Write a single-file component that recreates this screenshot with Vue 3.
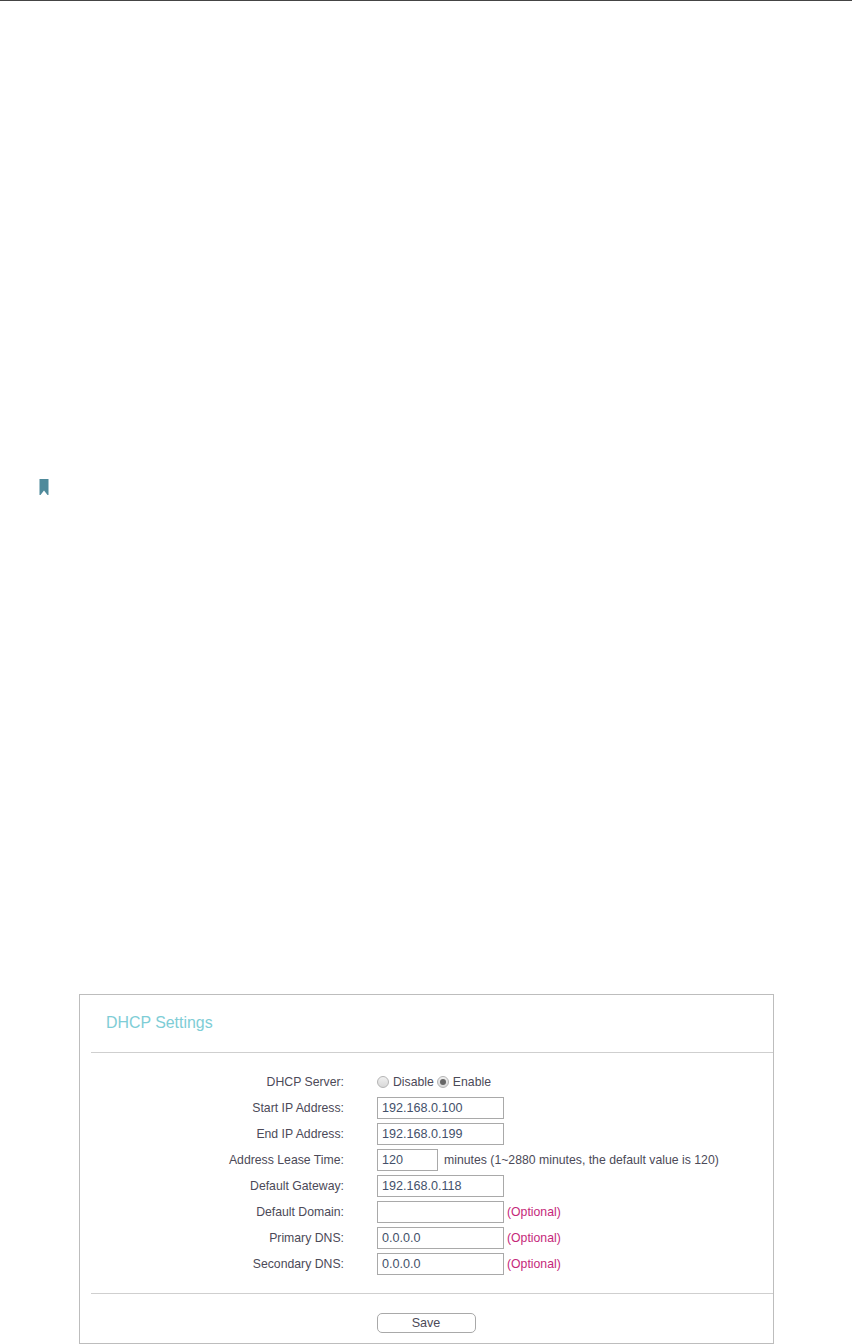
<script setup>
const rows = [
  { label: 'Start IP Address:', value: '192.168.0.100' },
  { label: 'End IP Address:', value: '192.168.0.199' },
  { label: 'Address Lease Time:', value: '120', short: true, note: 'minutes (1~2880 minutes, the default value is 120)' },
  { label: 'Default Gateway:', value: '192.168.0.118' },
  { label: 'Default Domain:', value: '', optional: true },
  { label: 'Primary DNS:', value: '0.0.0.0', optional: true },
  { label: 'Secondary DNS:', value: '0.0.0.0', optional: true },
]
</script>

<template>
  <div class="page">
    <div class="topline"></div>
    <div class="marker">
      <svg width="10" height="16" viewBox="0 0 10 16" aria-hidden="true">
        <path d="M0.5 0H9.5V16H8.5L5 11.5L1.5 16H0.5Z" fill="#4f8a9b" />
      </svg>
    </div>
    <section class="panel">
      <h2 class="title">DHCP Settings</h2>
      <div class="rule"></div>
      <div class="form">
        <div class="row">
          <span class="label">DHCP Server:</span>
          <span class="field radios">
            <span class="radio"></span><span class="radio-text">Disable</span>
            <span class="radio on"></span><span class="radio-text">Enable</span>
          </span>
        </div>
        <div v-for="r in rows" :key="r.label" class="row">
          <span class="label">{{ r.label }}</span>
          <span class="field">
            <span class="input" :class="{ short: r.short }">{{ r.value }}</span>
            <span v-if="r.note" class="note">{{ r.note }}</span>
            <span v-if="r.optional" class="optional">(Optional)</span>
          </span>
        </div>
      </div>
      <div class="rule"></div>
      <div class="actions"><span class="save">Save</span></div>
    </section>
  </div>
</template>

<style>
html, body { margin: 0; background: #fff; }
</style>

<style scoped>
.page {
  width: 852px;
  height: 1344px;
  overflow: hidden;
  background: #fff;
  font-family: "Liberation Sans", Arial, sans-serif;
  box-sizing: border-box;
}
.topline { height: 1px; background: #444; }
.marker { height: 993px; box-sizing: border-box; padding: 478px 0 0 39px; }
.marker svg { display: block; }
.panel {
  width: 695px;
  height: 350px;
  margin-left: 79px;
  box-sizing: border-box;
  border: 1px solid #bdbdbd;
  border-right-width: 1px;
  padding-left: 11px;
}
.title {
  margin: 0;
  height: 57px;
  padding-left: 15px;
  font-size: 15.9px;
  font-weight: 400;
  line-height: 55px;
  color: #7ecdd6;
}
.rule { height: 1px; background: #cfcfcf; }
.form { padding-top: 16px; height: 240px; box-sizing: border-box; }
.row { display: flex; align-items: center; height: 26px; font-size: 12.25px; color: #4c4a58; }
.label { width: 253px; text-align: right; flex: none; }
.field { display: flex; align-items: center; margin-left: 33px; }
.input {
  width: 127px;
  height: 22px;
  box-sizing: border-box;
  border: 1px solid #a9a9a9;
  padding-left: 4px;
  line-height: 20px;
  color: #44506a;
  font-size: 12.6px;
}
.input.short { width: 61px; }
.note { margin-left: 6px; }
.optional { margin-left: 3px; color: #c5287a; }
.radios { gap: 0; }
.radio {
  width: 12px;
  height: 12px;
  box-sizing: border-box;
  border-radius: 50%;
  border: 1px solid #b4b4b4;
  background: linear-gradient(#f0f0f0, #d8d8d8);
  position: relative;
}
.radio.on::after {
  content: "";
  position: absolute;
  left: 2px;
  top: 2px;
  width: 6px;
  height: 6px;
  border-radius: 50%;
  background: #666;
}
.radio-text { margin: 0 3px 0 4px; }
.actions { display: flex; justify-content: center; padding: 19px 0 0 0; width: 670px; }
.save {
  width: 99px;
  height: 20px;
  box-sizing: border-box;
  border: 1px solid #a9a9a9;
  border-radius: 5px;
  text-align: center;
  font-size: 12.6px;
  line-height: 18px;
  color: #4c4a58;
}
</style>
